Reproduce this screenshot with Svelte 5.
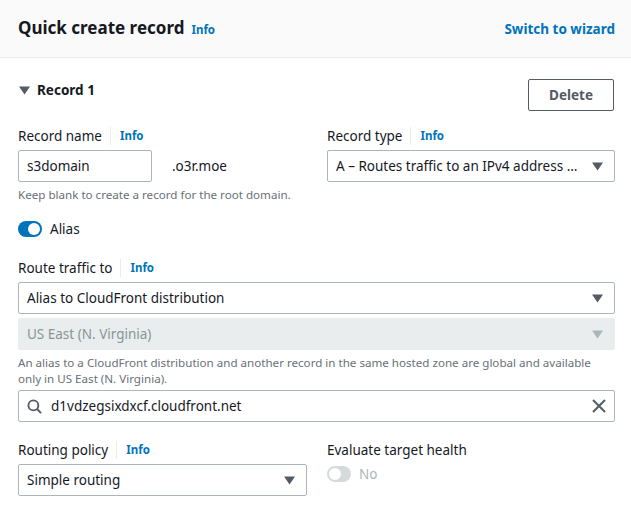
<script lang="ts">
    const infoLabel = 'Info';
</script>

{#snippet label(text: string)}
    <div class="label">
        <span>{text}</span>
        <a class="info" href="#top">{infoLabel}</a>
    </div>
{/snippet}

{#snippet caret()}
    <svg class="caret" viewBox="0 0 11 9"><path d="M0 .5h11L5.5 8.5z" /></svg>
{/snippet}

<div class="page">
    <header>
        <div class="title">
            <h2>Quick create record</h2>
            <a class="info" href="#top">{infoLabel}</a>
        </div>
        <a class="switch" href="#top">Switch to wizard</a>
    </header>

    <section>
        <div class="record-head">
            <div class="record-title">
                <svg class="caret" viewBox="0 0 11 9"><path d="M0 .5h11L5.5 8.5z" /></svg>
                <strong>Record 1</strong>
            </div>
            <button class="delete">Delete</button>
        </div>

        <div class="columns top">
            <div>
                {@render label('Record name')}
                <div class="name-row">
                    <div class="field name-input">s3domain</div>
                    <span class="suffix">.o3r.moe</span>
                </div>
            </div>
            <div>
                {@render label('Record type')}
                <div class="field select">
                    <span>A – Routes traffic to an IPv4 address …</span>
                    {@render caret()}
                </div>
            </div>
        </div>
        <p class="hint first">Keep blank to create a record for the root domain.</p>

        <div class="switch-row alias">
            <span class="track on"><span class="knob"></span></span>
            <span>Alias</span>
        </div>

        {@render label('Route traffic to')}
        <div class="field select">
            <span>Alias to CloudFront distribution</span>
            {@render caret()}
        </div>
        <div class="field select disabled">
            <span>US East (N. Virginia)</span>
            {@render caret()}
        </div>
        <p class="hint second">An alias to a CloudFront distribution and another record in the same hosted zone are global and available only in US East (N. Virginia).</p>
        <div class="field search">
            <svg class="search-icon" viewBox="0 0 16 16">
                <circle cx="6.8" cy="6.8" r="5.3" />
                <path d="M10.7 10.7L15 15" />
            </svg>
            <span class="search-text">d1vdzegsixdxcf.cloudfront.net</span>
            <svg class="clear" viewBox="0 0 14 14"><path d="M1 1l12 12M13 1L1 13" /></svg>
        </div>

        <div class="columns bottom">
            <div>
                {@render label('Routing policy')}
                <div class="field select">
                    <span>Simple routing</span>
                    {@render caret()}
                </div>
            </div>
            <div>
                <div class="label">Evaluate target health</div>
                <div class="switch-row off-row">
                    <span class="track off"><span class="knob"></span></span>
                    <span>No</span>
                </div>
            </div>
        </div>
    </section>
</div>

<style>
    :global(body) {
        background: #fff;
    }

    .page {
        width: 631px;
        height: 517px;
        overflow: hidden;
        font-family: "Noto Sans", "Open Sans", sans-serif;
        font-size: 13.5px;
        line-height: 20px;
        color: #16191f;
    }

    header {
        height: 58px;
        box-sizing: border-box;
        padding: 0 16px 0 18px;
        background: #fafafa;
        border-bottom: 1px solid #eaeded;
        display: flex;
        align-items: center;
        justify-content: space-between;
    }

    .title {
        display: flex;
        align-items: baseline;
        gap: 7px;
    }

    h2 {
        margin: 0;
        font-size: 17px;
        font-weight: 700;
    }

    a {
        text-decoration: none;
        color: #0073bb;
        font-weight: 700;
    }

    .info {
        font-size: 11.5px;
    }

    .switch {
        font-size: 13.5px;
    }

    section {
        padding: 21px 16px 0 18px;
    }

    .record-head {
        display: flex;
        align-items: flex-start;
        justify-content: space-between;
        padding-right: 1px;
    }

    .record-title {
        display: flex;
        align-items: center;
        gap: 7px;
        margin: 1px 0 0 1px;
    }

    .record-title strong {
        font-size: 13.5px;
    }

    .delete {
        width: 86px;
        height: 32px;
        box-sizing: border-box;
        border: 1px solid #545b64;
        border-radius: 2px;
        background: #fff;
        color: #545b64;
        font: 700 13.5px "Noto Sans", sans-serif;
    }

    .columns {
        display: grid;
        grid-template-columns: 289px 288px;
        gap: 20px;
    }

    .top {
        margin-top: 15px;
    }

    .bottom {
        margin-top: 18px;
    }

    .label {
        display: flex;
        align-items: center;
        height: 20px;
        margin-bottom: 4px;
    }

    .label .info {
        margin-left: 8px;
        padding-left: 9px;
        border-left: 1px solid #eaeded;
        line-height: 18px;
    }

    .field {
        height: 32px;
        box-sizing: border-box;
        border: 1px solid #aab7b8;
        border-radius: 2px;
        padding: 0 8px;
        display: flex;
        align-items: center;
        background: #fff;
    }

    .name-row {
        display: flex;
        align-items: center;
    }

    .select {
        justify-content: space-between;
        padding-right: 11px;
    }

    .name-input {
        width: 134px;
    }

    .suffix {
        margin-left: 20px;
    }

    .caret {
        width: 11px;
        height: 9px;
        fill: #545b64;
        flex: none;
    }

    .disabled {
        margin-top: 4px;
        background: #eaeded;
        border-color: #eaeded;
        color: #879596;
    }

    .disabled .caret {
        fill: #aab7b8;
    }

    .hint {
        margin: 0;
        font-size: 11.6px;
        line-height: 16px;
        color: #687078;
    }

    .first {
        margin-top: 5px;
    }

    .second {
        margin-top: 5px;
        max-width: 580px;
    }

    .switch-row {
        display: flex;
        align-items: center;
        gap: 8px;
    }

    .alias {
        margin: 16px 0 19px;
    }

    .track {
        width: 24px;
        height: 16px;
        border-radius: 8px;
        display: flex;
        align-items: center;
        padding: 0 2px;
        box-sizing: border-box;
    }

    .knob {
        width: 12px;
        height: 12px;
        border-radius: 50%;
        background: #fff;
    }

    .on {
        background: #0073bb;
        justify-content: flex-end;
    }

    .off {
        background: #d5dbdb;
    }

    .off-row {
        margin-top: 2px;
        color: #aab7b8;
    }

    .search {
        margin-top: 3px;
        padding: 0 8px;
    }

    .search-icon {
        width: 15px;
        height: 15px;
        fill: none;
        stroke: #545b64;
        stroke-width: 2;
        flex: none;
    }

    .search-text {
        margin-left: 9px;
        flex: 1;
    }

    .clear {
        width: 14px;
        height: 14px;
        fill: none;
        stroke: #545b64;
        stroke-width: 2;
    }
</style>
